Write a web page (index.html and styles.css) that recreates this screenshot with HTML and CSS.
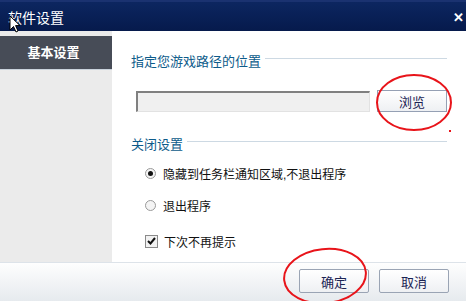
FILE: index.html
```html
<!DOCTYPE html>
<html lang="zh-CN">
	<head>
		<meta charset="utf-8">
		<link rel="stylesheet" href="styles.css">
	</head>
	<body>
		<div class="dialog">
			<header class="titlebar">
				<span class="title">软件设置</span>
				<span class="close">&#x2715;</span>
			</header>

			<div class="main">
				<nav class="sidebar">
					<div class="nav-item active">基本设置</div>
				</nav>

				<section class="content">
					<div class="group-title"><span>指定您游戏路径的位置</span><i></i></div>
					<div class="path-row">
						<input type="text" class="path-input" disabled>
						<button class="btn browse">浏览</button>
					</div>

					<div class="group-title second"><span>关闭设置</span><i></i></div>
					<ul class="options">
						<li><span class="radio checked"></span>隐藏到任务栏通知区域,不退出程序</li>
						<li><span class="radio"></span>退出程序</li>
						<li class="check-row"><span class="checkbox">
							<svg width="9" height="8" viewBox="0 0 9 8"><path d="M1 4 L3.5 6.5 L8 1" fill="none" stroke="#111" stroke-width="2"/></svg>
						</span>下次不再提示</li>
					</ul>
				</section>
			</div>

			<footer class="footer">
				<button class="btn">确定</button>
				<button class="btn">取消</button>
			</footer>

			<!-- hand-drawn marks on top of the screenshot -->
			<svg class="marks" width="466" height="301" viewBox="0 0 466 301">
				<ellipse cx="414" cy="102.5" rx="37" ry="27.5" fill="none" stroke="#e8141a" stroke-width="2"/>
				<ellipse cx="325" cy="276" rx="41" ry="27" fill="none" stroke="#e8141a" stroke-width="2" transform="rotate(-6 325 276)"/>
				<rect x="449" y="130" width="2" height="2" fill="#e8141a"/>
			</svg>
			<svg class="cursor" width="13" height="19" viewBox="0 0 13 19">
				<path d="M1 1 L1 15 L4.5 11.5 L7 17 L9 16 L6.6 10.6 L11 10.6 Z" fill="#fff" stroke="#000" stroke-width="1"/>
			</svg>
		</div>
	</body>
</html>
```
FILE: styles.css
```css
body { margin: 0; font: 13px "Liberation Sans", "Noto Sans CJK SC", sans-serif; overflow: hidden; }

.dialog { position: relative; width: 466px; height: 301px; display: flex; flex-direction: column; background: #fff; }

.titlebar {
	height: 31px;
	flex: none;
	display: flex;
	align-items: center;
	justify-content: space-between;
	padding: 1px 2px 0 8px;
	box-sizing: border-box;
	background: linear-gradient(#0c2660, #061a4c);
	border-top: 2px solid #1a3270;
	color: #fff;
}
.title { font-size: 14px; }
.close { font-size: 13px; font-weight: bold; width: 12px; text-align: center; }

.main { display: flex; height: 231px; }

.sidebar { width: 112px; flex: none; background: #ebebeb; padding-top: 5px; }
.nav-item { height: 33px; line-height: 33px; text-align: center; font-weight: bold; color: #fff; }
.nav-item.active { background: #474c57; padding-right: 5px; border-bottom: 1px solid #c9d2dc; }

.content { flex: 1; padding: 21px 36px 0 19px; }

.group-title { display: flex; align-items: center; color: #0d5b8a; height: 16px; }
.group-title i { flex: 1; height: 1px; background: #cdd9e3; margin: -4px 0 0 4px; }
.group-title.second { margin-top: 23px; }

.path-row { display: flex; align-items: center; margin: 22px 0 0 5px; }
.path-input {
	width: 234px;
	height: 21px;
	box-sizing: border-box;
	background: #f0f0f0;
	border: 1px solid #e2e2e2;
	border-top: 2px solid #808080;
	border-left: 2px solid #808080;
	margin: 0;
}

.btn {
	width: 70px;
	height: 24px;
	font: 13px "Liberation Sans", "Noto Sans CJK SC", sans-serif;
	color: #1c2454;
	background: linear-gradient(#fff, #eef0f3);
	border: 1px solid #9aa4b4;
	border-radius: 2px;
	padding: 0;
}
.browse { height: 22px; margin-left: 7px; border-radius: 0; border-color: #95a0b4; }

.options { list-style: none; margin: 12px 0 0; padding: 0 0 0 14px; font-size: 12px; }
.options li { display: flex; align-items: center; height: 20px; margin-bottom: 12px; color: #111; }
.options li.check-row { margin-top: 16px; }

.radio {
	width: 9px;
	height: 9px;
	border-radius: 50%;
	border: 1px solid #9a9a9a;
	background: #f4f4f4;
	margin-right: 7px;
	position: relative;
}
.radio.checked::after {
	content: "";
	position: absolute;
	left: 2px;
	top: 2px;
	width: 5px;
	height: 5px;
	border-radius: 50%;
	background: #111;
}
.checkbox {
	width: 11px;
	height: 11px;
	border: 1px solid #8a8a8a;
	background: #f2f2f2;
	margin-right: 6px;
	display: flex;
	align-items: center;
	justify-content: center;
}

.footer {
	flex: 1;
	display: flex;
	justify-content: flex-end;
	align-items: flex-start;
	gap: 10px;
	padding: 6px 17px 0 0;
	border-top: 1px solid #dde3e9;
	background: linear-gradient(#fefefe, #e6eaee);
}

.marks { position: absolute; left: 0; top: 0; pointer-events: none; }
.cursor { position: absolute; left: 9px; top: 15px; pointer-events: none; }
```
